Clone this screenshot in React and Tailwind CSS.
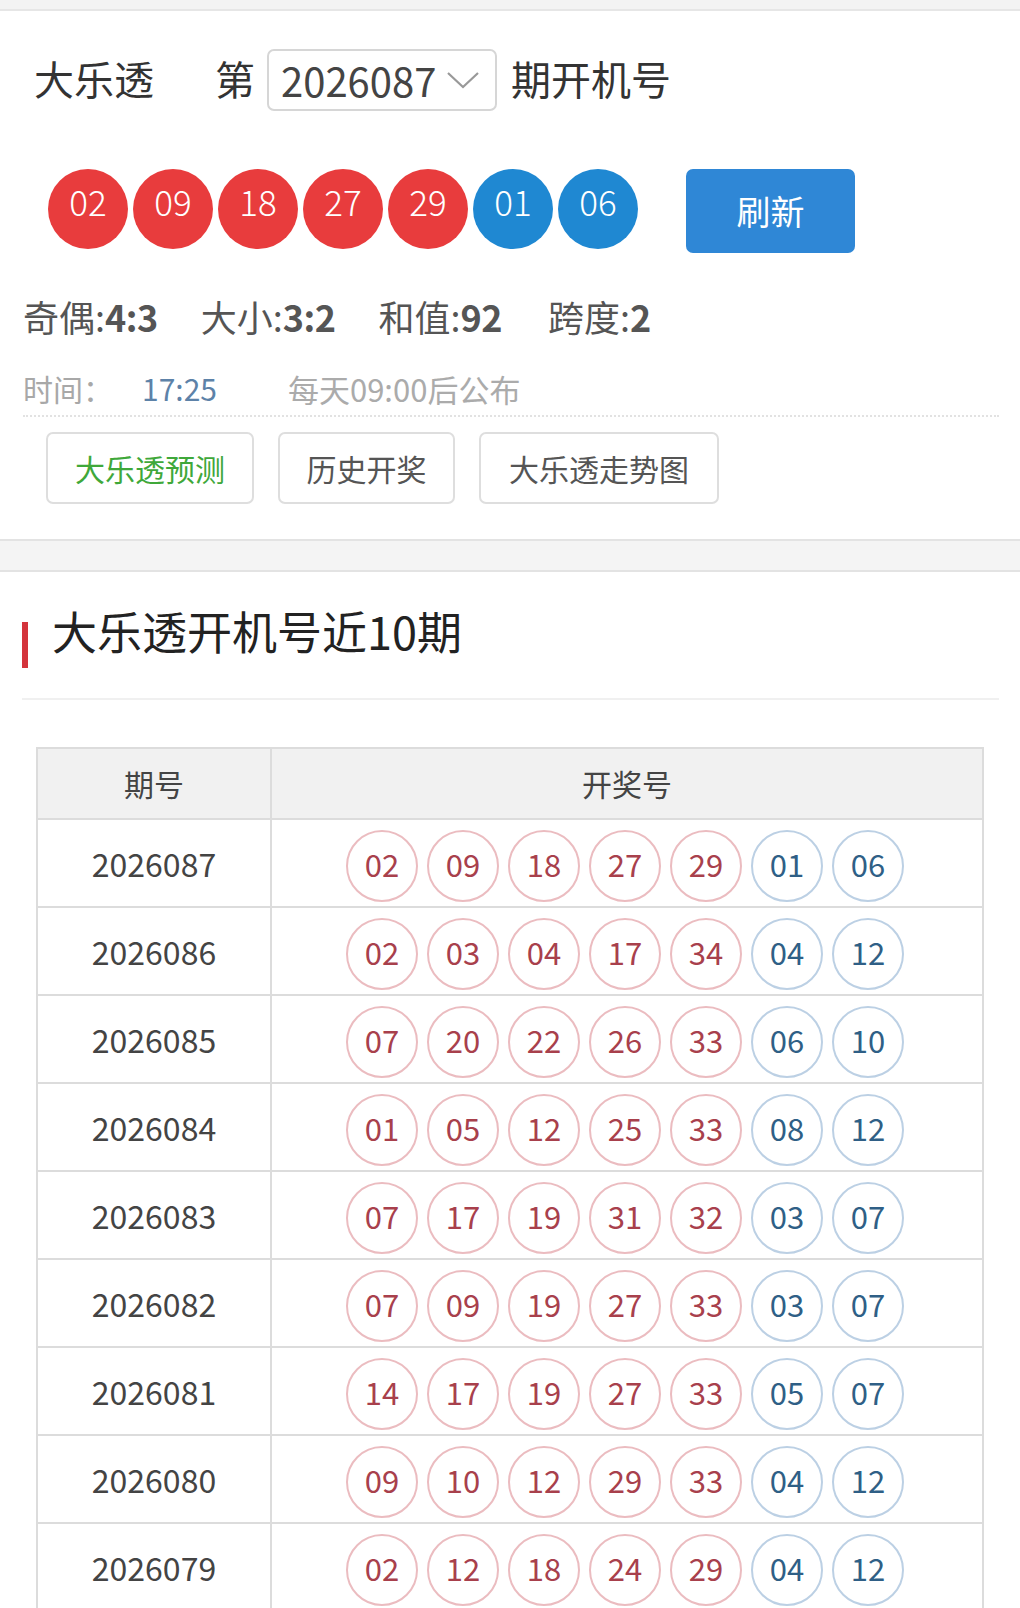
import React from "react";

const rows = [
  ["2026087", ["02", "09", "18", "27", "29"], ["01", "06"]],
  ["2026086", ["02", "03", "04", "17", "34"], ["04", "12"]],
  ["2026085", ["07", "20", "22", "26", "33"], ["06", "10"]],
  ["2026084", ["01", "05", "12", "25", "33"], ["08", "12"]],
  ["2026083", ["07", "17", "19", "31", "32"], ["03", "07"]],
  ["2026082", ["07", "09", "19", "27", "33"], ["03", "07"]],
  ["2026081", ["14", "17", "19", "27", "33"], ["05", "07"]],
  ["2026080", ["09", "10", "12", "29", "33"], ["04", "12"]],
  ["2026079", ["02", "12", "18", "24", "29"], ["04", "12"]],
];

const font = { fontFamily: '"Noto Sans CJK SC", "Noto Sans", sans-serif' };

export default function App() {
  return (
    <div className="w-[1020px] bg-white text-[#333]" style={font}>
      {/* top strip */}
      <div className="h-[11px] bg-[#f3f3f3] border-b-2 border-[#e6e6e6]" />

      {/* card 1 */}
      <div className="bg-white">
        {/* title row */}
        <div className="flex items-center h-[100px] pl-[34px] mt-[17px] text-[40px] text-[#333] leading-none">
          <span>大乐透</span>
          <span className="ml-[61px]">第</span>
          <div className="ml-[12px] flex items-center w-[230px] h-[62px] border-2 border-[#d6d6d6] rounded-[7px] pl-[12px] mt-[4px]">
            <span className="text-[40px] text-[#444]">2026087</span>
            <svg className="ml-[10px]" width="34" height="20" viewBox="0 0 34 20" fill="none">
              <path d="M2 3 L17 17 L32 3" stroke="#999" strokeWidth="2.2" />
            </svg>
          </div>
          <span className="ml-[14px]">期开机号</span>
        </div>

        {/* balls row */}
        <div className="flex items-start mt-[41px] pl-[48px]">
          <div className="flex gap-[5px]">
            {["02", "09", "18", "27", "29"].map((n, i) => (
              <div key={i} className="w-[80px] h-[80px] rounded-full bg-[#e83c3d] text-white text-[35px] font-light flex items-center justify-center leading-none pb-[18px]">
                {n}
              </div>
            ))}
            {["01", "06"].map((n, i) => (
              <div key={i} className="w-[80px] h-[80px] rounded-full bg-[#1f88d2] text-white text-[35px] font-light flex items-center justify-center leading-none pb-[18px]">
                {n}
              </div>
            ))}
          </div>
          <div className="ml-[48px] w-[169px] h-[84px] rounded-[7px] bg-[#2f87d6] text-white text-[34px] flex items-center justify-center leading-none">
            刷新
          </div>
        </div>

        {/* stats */}
        <div className="flex items-center h-[60px] mt-[33px] pl-[23px] text-[36px] text-[#555] leading-none">
          <span>奇偶:<b className="font-bold tracking-[-0.5px]">4:3</b></span>
          <span className="ml-[43px]">大小:<b className="font-bold tracking-[-0.5px]">3:2</b></span>
          <span className="ml-[43px]">和值:<b className="font-bold tracking-[-0.5px]">92</b></span>
          <span className="ml-[46px]">跨度:<b className="font-bold">2</b></span>
        </div>

        {/* time */}
        <div className="flex items-center h-[50px] mt-[17px] pl-[23px] text-[30px] leading-none">
          <span className="text-[#a8a8a8]">时间：</span>
          <span className="ml-[29px] text-[#5d82a8]">17:25</span>
          <span className="ml-[71px] text-[#ababab] text-[31px]">每天09:00后公布</span>
        </div>
        <div className="ml-[23px] mr-[21px] mt-[2px] border-t-2 border-dotted border-[#e2e2e2]" />

        {/* link buttons */}
        <div className="flex pl-[46px] gap-[24px] mt-[15px] pb-[35px]">
          <div className="w-[208px] h-[72px] border-2 border-[#dedede] rounded-[7px] flex items-center justify-center text-[30px] text-[#3fa83a]">大乐透预测</div>
          <div className="w-[177px] h-[72px] border-2 border-[#dedede] rounded-[7px] flex items-center justify-center text-[30px] text-[#555]">历史开奖</div>
          <div className="w-[240px] h-[72px] border-2 border-[#dedede] rounded-[7px] flex items-center justify-center text-[30px] text-[#555]">大乐透走势图</div>
        </div>
      </div>

      {/* gray band */}
      <div className="h-[33px] bg-[#f4f4f4] border-t-2 border-b-2 border-[#e3e3e3]" />

      {/* section 2 */}
      <div className="bg-white">
        <div className="flex items-center h-[126px] pl-[22px]">
          <div className="w-[6px] h-[46px] bg-[#d4343c] mt-[20px]" />
          <span className="ml-[24px] text-[45px] text-[#222] leading-none mb-[9px]">大乐透开机号近10期</span>
        </div>
        <div className="ml-[22px] mr-[21px] border-t-2 border-[#f0f0f0]" />

        <div className="mt-[47px] ml-[36px] w-[948px] border-2 border-b-0 border-[#dcdcdc]">
          <div className="flex h-[71px] bg-[#f1f1f1] text-[30px] text-[#444] border-b-2 border-[#dcdcdc]">
            <div className="w-[234px] border-r-2 border-[#dcdcdc] flex items-center justify-center">期号</div>
            <div className="flex-1 flex items-center justify-center">开奖号</div>
          </div>
          {rows.map(([p, reds, blues]) => (
            <div key={p} className="flex h-[88px] border-b-2 border-[#dcdcdc]">
              <div className="w-[234px] border-r-2 border-[#dcdcdc] flex items-center justify-center text-[32px] text-[#444]">
                {p}
              </div>
              <div className="flex-1 flex items-center justify-center gap-[9px] pt-[6px] pr-[4px]">
                {reds.map((n, i) => (
                  <div key={"r" + i} className="w-[72px] h-[72px] rounded-full border-2 border-[#ebbcc0] flex items-center justify-center text-[31px] text-[#a8404c] leading-none pb-[6px]">
                    {n}
                  </div>
                ))}
                {blues.map((n, i) => (
                  <div key={"b" + i} className="w-[72px] h-[72px] rounded-full border-2 border-[#bcd0e4] flex items-center justify-center text-[31px] text-[#2f5f86] leading-none pb-[6px]">
                    {n}
                  </div>
                ))}
              </div>
            </div>
          ))}
        </div>
      </div>
    </div>
  );
}
